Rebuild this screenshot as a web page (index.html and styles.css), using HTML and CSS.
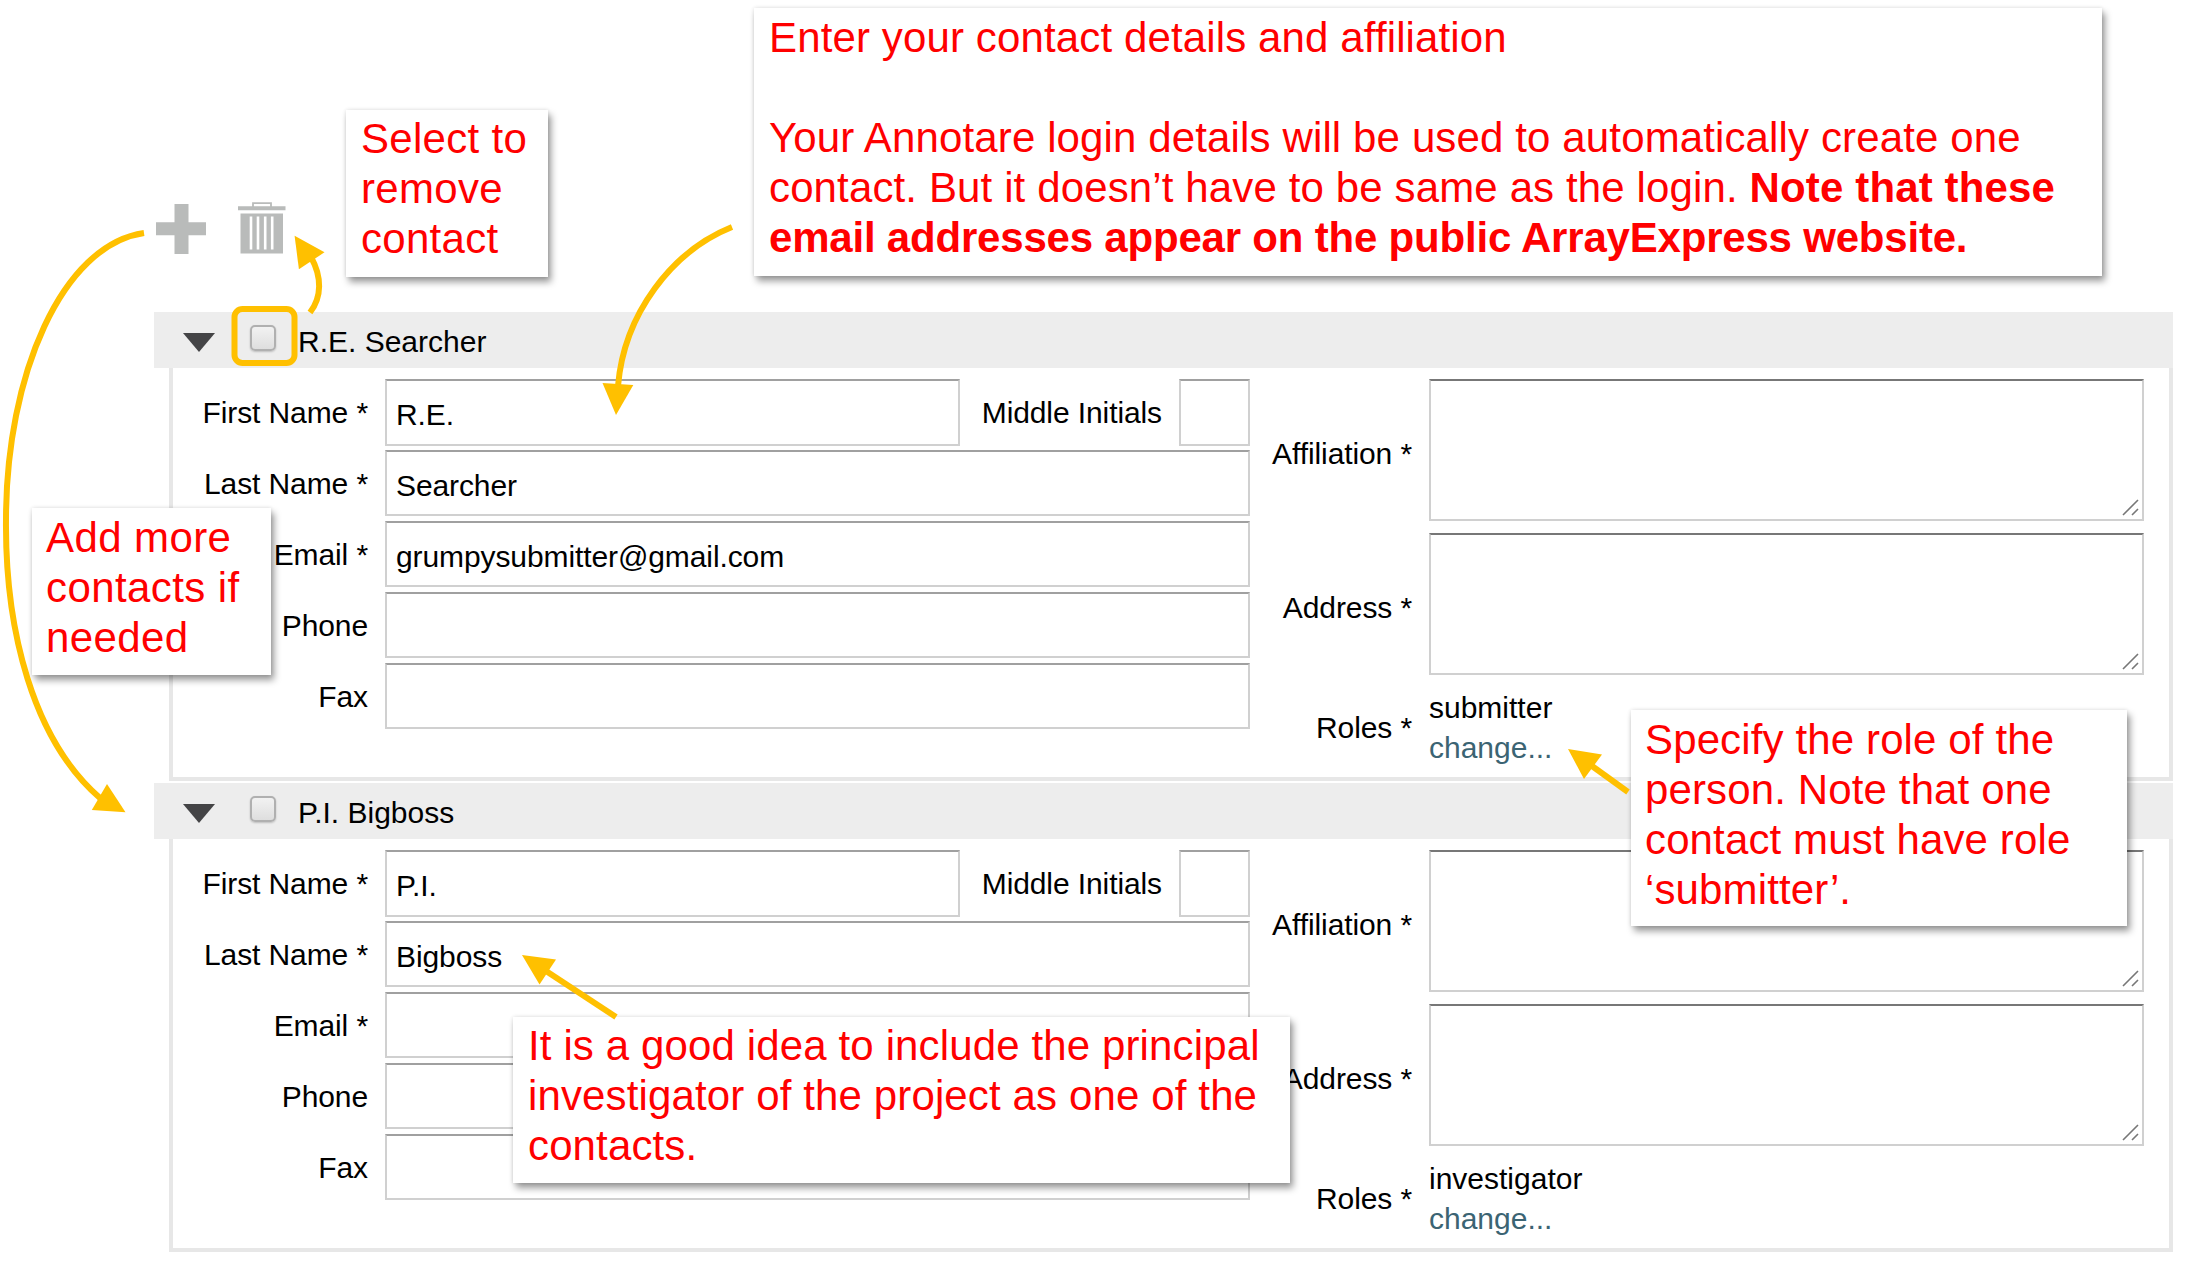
FILE: index.html
```html
<!DOCTYPE html>
<html lang="en">
<head>
<meta charset="utf-8">
<title>Contacts</title>
<link rel="stylesheet" href="styles.css">
</head>
<body>
<main class="page">
  <div class="toolbar">
    <svg class="icon-add" width="50" height="50" viewBox="0 0 50 50"><path d="M18.500 0h14v18.300h17.500v13h-17.500v18.700h-14v-18.700h-18.500v-13h18.500z" fill="#b9bbba"/></svg>
    <svg class="icon-trash" width="48" height="52" viewBox="0 0 48 52"><path d="M15 5V1.200h18V5" fill="none" stroke="#b9bbba" stroke-width="1.800"/><path d="M0 4.300h47.500v4H0z" fill="#b9bbba"/><path d="M2.500 11.500h42.500v40h-42.500z" fill="#b9bbba"/><path d="M13 14.500v33M20 14.500v33M27.200 14.500v33M34.200 14.500v33" stroke="#fff" stroke-width="2.600"/></svg>
  </div>

  <section class="contact">
    <header class="contact-head">
      <svg class="caret" width="32" height="19" viewBox="0 0 32 19"><path d="M0 0h32L16 19z" fill="#444446"/></svg>
      <span class="check"></span>
      <span class="contact-name">R.E. Searcher</span>
    </header>
    <div class="contact-body">
      <div class="col-left">
        <div class="row"><label>First Name *</label><span class="input first">R.E.</span><label class="mid">Middle Initials</label><span class="input initials"></span></div>
        <div class="row"><label>Last Name *</label><span class="input">Searcher</span></div>
        <div class="row"><label>Email *</label><span class="input">grumpysubmitter@gmail.com</span></div>
        <div class="row"><label>Phone</label><span class="input"></span></div>
        <div class="row"><label>Fax</label><span class="input"></span></div>
      </div>
      <div class="col-right">
        <div class="area-row"><label>Affiliation *</label><span class="area"><svg class="grip" width="17" height="17" viewBox="0 0 17 17"><path d="M1 16L16 1M10 16l6-6"/></svg></span></div>
        <div class="area-row"><label>Address *</label><span class="area"><svg class="grip" width="17" height="17" viewBox="0 0 17 17"><path d="M1 16L16 1M10 16l6-6"/></svg></span></div>
        <div class="roles-row"><label>Roles *</label><div class="roles"><span>submitter</span><a class="change">change...</a></div></div>
      </div>
    </div>
  </section>

  <section class="contact">
    <header class="contact-head">
      <svg class="caret" width="32" height="19" viewBox="0 0 32 19"><path d="M0 0h32L16 19z" fill="#444446"/></svg>
      <span class="check"></span>
      <span class="contact-name">P.I. Bigboss</span>
    </header>
    <div class="contact-body">
      <div class="col-left">
        <div class="row"><label>First Name *</label><span class="input first">P.I.</span><label class="mid">Middle Initials</label><span class="input initials"></span></div>
        <div class="row"><label>Last Name *</label><span class="input">Bigboss</span></div>
        <div class="row"><label>Email *</label><span class="input"></span></div>
        <div class="row"><label>Phone</label><span class="input"></span></div>
        <div class="row"><label>Fax</label><span class="input"></span></div>
      </div>
      <div class="col-right">
        <div class="area-row"><label>Affiliation *</label><span class="area"><svg class="grip" width="17" height="17" viewBox="0 0 17 17"><path d="M1 16L16 1M10 16l6-6"/></svg></span></div>
        <div class="area-row"><label>Address *</label><span class="area"><svg class="grip" width="17" height="17" viewBox="0 0 17 17"><path d="M1 16L16 1M10 16l6-6"/></svg></span></div>
        <div class="roles-row"><label>Roles *</label><div class="roles"><span>investigator</span><a class="change">change...</a></div></div>
      </div>
    </div>
  </section>

  <aside class="note note-details">
    <p>Enter your contact details and affiliation</p>
    <p class="spaced">Your Annotare login details will be used to automatically create one<br>contact. But it doesn’t have to be same as the login. <b>Note that these<br><span class="tight">email addresses appear on the public ArrayExpress website.</span></b></p>
  </aside>
  <aside class="note note-remove">Select to<br>remove<br>contact</aside>
  <aside class="note note-add">Add more<br>contacts if<br>needed</aside>
  <aside class="note note-role">Specify the role of the<br>person. Note that one<br>contact must have role<br>‘submitter’.</aside>
  <aside class="note note-pi">It is a good idea to include the principal<br>investigator of the project as one of the<br>contacts.</aside>

  <svg class="arrows" width="2191" height="1285" viewBox="0 0 2191 1285">
    <g fill="none" stroke="#ffc000" stroke-width="6">
      <path d="M144 233C62 245 6 375 6 520C5 630 33 740 100 798"/>
      <path d="M310 312.500C322 297 322 277 311 257"/>
      <path d="M732 227C672 251 624 314 618 386"/>
      <path d="M1628 792L1592 766"/>
      <path d="M616 1017L546 971"/>
      <rect x="234.500" y="309" width="60" height="54" rx="8"/>
    </g>
    <g fill="#ffc000">
      <path d="M125.500 812.300L107 784 91.800 810z"/>
      <path d="M294.600 235.700L324.500 252.300 298.900 269.300z"/>
      <path d="M616 415L602.500 383 633.300 385z"/>
      <path d="M1568 749L1602 754.500 1584 779z"/>
      <path d="M522 955L556 959.500 539.500 984.500z"/>
    </g>
  </svg>
</main>
</body>
</html>
```
FILE: styles.css
```css
* { box-sizing: border-box; }

body {
  margin: 0;
  background: #fff;
  color: #000;
  font: 30px/40px "Liberation Sans", Arial, sans-serif;
}

p { margin: 0; }

.page {
  position: relative;
  width: 2191px;
  height: 1285px;
  padding: 202px 18px 0 154px;
  overflow: hidden;
}

.toolbar {
  display: flex;
  align-items: flex-start;
  gap: 32px;
  height: 110px;
  padding-left: 2px;
}

.icon-add { margin-top: 2px; }

.contact { height: 471px; }

.contact-head {
  display: flex;
  align-items: center;
  height: 56px;
  padding-left: 29px;
  background: #ededed;
}

.caret { margin-top: 5px; }

.check {
  width: 26px;
  height: 26px;
  margin: -5px 22px 0 35px;
  border: 2px solid #b0b0b0;
  border-radius: 5px;
  background: linear-gradient(#f2f2f2, #dedede);
  box-shadow: 0 1px 2px rgba(0, 0, 0, .2);
}

.contact-name { padding-top: 3px; }

.contact-body {
  display: flex;
  height: 413px;
  margin-left: 15px;
  padding: 11px 25px 0 0;
  border: solid #e7e7e7;
  border-width: 0 4px 4px;
}

.col-left {
  display: flex;
  flex-direction: column;
  gap: 4.400px;
  width: 1077px;
}

.row {
  display: flex;
  height: 66.500px;
}

label {
  width: 212px;
  padding-right: 17px;
  line-height: 67px;
  letter-spacing: -.1px;
  text-align: right;
  white-space: nowrap;
}

.row label:first-child { flex: none; }

.row label.mid {
  width: 219px;
  padding-right: 17px;
}

.input {
  flex: 1;
  height: 66.500px;
  padding-left: 9px;
  border: 2px solid #d0d0d0;
  border-top-color: #a0a0a0;
  line-height: 67px;
  letter-spacing: -.1px;
}

.input.initials { flex: none; width: 71px; }

.col-right {
  display: flex;
  flex: 1;
  flex-direction: column;
  gap: 12.300px;
}

.area-row,
.roles-row {
  display: flex;
  align-items: center;
}

.area-row label,
.roles-row label { width: 179px; }

.area-row label { padding-top: 8px; }

.area {
  display: flex;
  flex: 1;
  align-items: flex-end;
  justify-content: flex-end;
  height: 141.700px;
  padding: 3px;
  border: 2px solid #d0d0d0;
  border-top-color: #777;
}

.grip {
  fill: none;
  stroke: #777;
  stroke-width: 1.600;
}

.roles {
  display: flex;
  flex-direction: column;
  padding-top: 1px;
}

.change { color: #3b6473; }

.note {
  position: absolute;
  padding: 4px 0 0 15px;
  background: #fff;
  box-shadow: 3px 5px 7px rgba(0, 0, 0, .4), 0 0 4px rgba(0, 0, 0, .12);
  color: #f00;
  font-size: 42px;
  line-height: 50px;
  letter-spacing: .13px;
  white-space: nowrap;
}

.spaced { margin-top: 50px; }

.tight { letter-spacing: -.2px; }

.note-details { left: 754px; top: 8px; width: 1348px; height: 268px; padding-top: 5px; }
.note-remove { left: 346px; top: 110px; width: 202px; height: 167px; letter-spacing: .3px; }
.note-add { left: 32px; top: 508px; width: 239px; height: 167px; padding: 5px 0 0 14px; letter-spacing: .4px; }
.note-role { left: 1631px; top: 710px; width: 496px; height: 216px; padding: 5px 0 0 14px; }
.note-pi { left: 513px; top: 1017px; width: 777px; height: 166px; }

.arrows {
  position: absolute;
  left: 0;
  top: 0;
}
```
